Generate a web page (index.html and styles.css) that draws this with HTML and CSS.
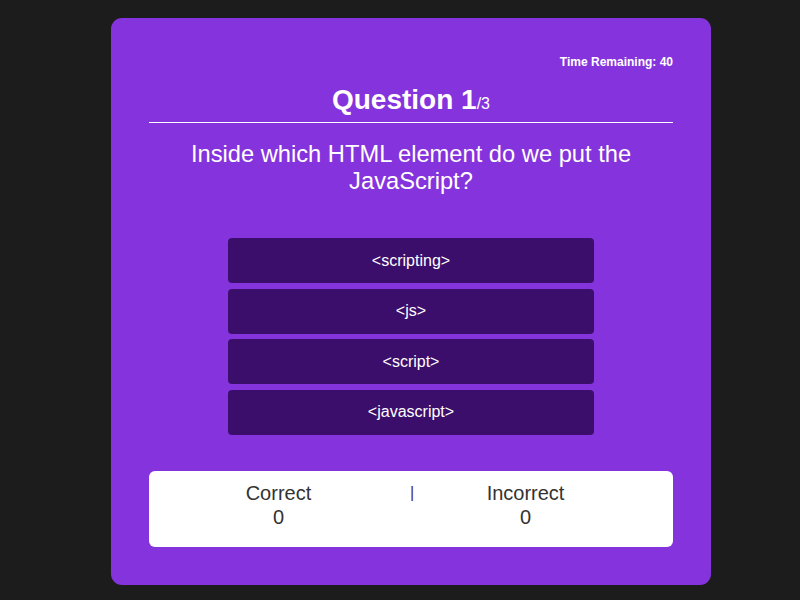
FILE: index.html
```html
<!DOCTYPE html>
<html>
<head>
<meta charset="utf-8">
<link rel="stylesheet" href="styles.css">
</head>
<body>
<div class="quiz">
  <div class="timer">Time Remaining: 40</div>
  <h1 class="heading">Question 1<span class="total">/3</span></h1>
  <hr class="rule">
  <p class="question">Inside which HTML element do we put the JavaScript?</p>
  <div class="answers">
    <button class="answer">&lt;scripting&gt;</button>
    <button class="answer">&lt;js&gt;</button>
    <button class="answer">&lt;script&gt;</button>
    <button class="answer">&lt;javascript&gt;</button>
  </div>
  <div class="score">
    <div class="score-item"><div>Correct</div><div>0</div></div>
    <div class="divider">|</div>
    <div class="score-item right"><div>Incorrect</div><div>0</div></div>
  </div>
</div>
</body>
</html>
```

FILE: styles.css
```css
html, body {
  margin: 0;
  padding: 0;
  background: #1c1c1c;
  font-family: "Liberation Sans", Arial, sans-serif;
}
body {
  padding-top: 18px;
}
.quiz {
  box-sizing: border-box;
  width: 600px;
  margin-left: 111px;
  background: #8534dd;
  border-radius: 11px;
  padding: 37px 38px 38px;
  color: #fff;
}
.timer {
  text-align: right;
  font-size: 12px;
  font-weight: bold;
  line-height: 14px;
}
.heading {
  margin: 15px 0 0;
  text-align: center;
  font-size: 28px;
  line-height: 32px;
  font-weight: bold;
}
.total {
  font-size: 16px;
  font-weight: normal;
  line-height: 16px;
}
.rule {
  margin: 6px 0 0;
  border: 0;
  border-top: 1px solid #fff;
  height: 0;
}
.question {
  margin: 18px 0 0;
  text-align: center;
  font-size: 23.7px;
  line-height: 27px;
}
.answers {
  width: 70%;
  margin: 43px auto 0;
  display: flex;
  flex-direction: column;
  gap: 5.5px;
}
.answer {
  height: 45px;
  border: 0;
  border-radius: 4px;
  background: #3c0e6c;
  color: #fff;
  font-family: "Liberation Sans", Arial, sans-serif;
  font-size: 16px;
  padding: 0;
}
.score {
  margin-top: 36.5px;
  height: 76px;
  box-sizing: border-box;
  background: #fff;
  border-radius: 6px;
  color: #333;
  font-size: 20px;
  line-height: 24px;
  padding: 10px 0 18px;
  display: grid;
  grid-template-columns: 1fr auto 1fr;
  text-align: center;
}
.score-item.right {
  padding-right: 36px;
}
.divider {
  font-size: 16px;
  color: #4a2a6a;
  line-height: 24px;
  padding-left: 2px;
}
```
